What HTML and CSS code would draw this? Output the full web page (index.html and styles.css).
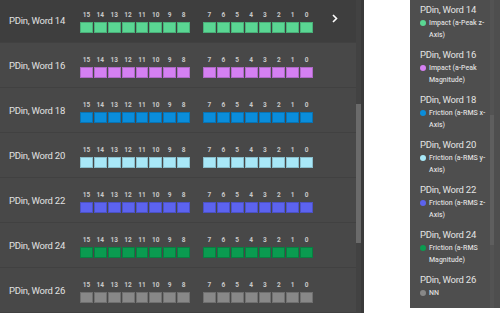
FILE: index.html
```html
<!DOCTYPE html>
<html lang="en">
<head>
    <meta charset="UTF-8">
    <meta name="viewport" content="width=device-width, initial-scale=1.0">
    <title>PDin Words</title>
    <link rel="stylesheet" href="styles.css">
</head>
<body>
    <div class="word-panel">
        <div class="word-list">
            <div class="word-row is-active">
                <div class="word-name">PDin, Word 14</div>
                <div class="bits green">
                    <div class="byte"><span>15</span><span>14</span><span>13</span><span>12</span><span>11</span><span>10</span><span>9</span><span>8</span><i></i><i></i><i></i><i></i><i></i><i></i><i></i><i></i></div>
                    <div class="byte"><span>7</span><span>6</span><span>5</span><span>4</span><span>3</span><span>2</span><span>1</span><span>0</span><i></i><i></i><i></i><i></i><i></i><i></i><i></i><i></i></div>
                </div>
                <svg class="chevron" width="6" height="9" viewBox="0 0 6 9"><polyline points="1,1 4.5,4.5 1,8" fill="none" stroke="#fff" stroke-width="1.6"/></svg>
            </div>
            <div class="word-row">
                <div class="word-name">PDin, Word 16</div>
                <div class="bits violet">
                    <div class="byte"><span>15</span><span>14</span><span>13</span><span>12</span><span>11</span><span>10</span><span>9</span><span>8</span><i></i><i></i><i></i><i></i><i></i><i></i><i></i><i></i></div>
                    <div class="byte"><span>7</span><span>6</span><span>5</span><span>4</span><span>3</span><span>2</span><span>1</span><span>0</span><i></i><i></i><i></i><i></i><i></i><i></i><i></i><i></i></div>
                </div>
            </div>
            <div class="word-row">
                <div class="word-name">PDin, Word 18</div>
                <div class="bits blue">
                    <div class="byte"><span>15</span><span>14</span><span>13</span><span>12</span><span>11</span><span>10</span><span>9</span><span>8</span><i></i><i></i><i></i><i></i><i></i><i></i><i></i><i></i></div>
                    <div class="byte"><span>7</span><span>6</span><span>5</span><span>4</span><span>3</span><span>2</span><span>1</span><span>0</span><i></i><i></i><i></i><i></i><i></i><i></i><i></i><i></i></div>
                </div>
            </div>
            <div class="word-row">
                <div class="word-name">PDin, Word 20</div>
                <div class="bits cyan">
                    <div class="byte"><span>15</span><span>14</span><span>13</span><span>12</span><span>11</span><span>10</span><span>9</span><span>8</span><i></i><i></i><i></i><i></i><i></i><i></i><i></i><i></i></div>
                    <div class="byte"><span>7</span><span>6</span><span>5</span><span>4</span><span>3</span><span>2</span><span>1</span><span>0</span><i></i><i></i><i></i><i></i><i></i><i></i><i></i><i></i></div>
                </div>
            </div>
            <div class="word-row">
                <div class="word-name">PDin, Word 22</div>
                <div class="bits indigo">
                    <div class="byte"><span>15</span><span>14</span><span>13</span><span>12</span><span>11</span><span>10</span><span>9</span><span>8</span><i></i><i></i><i></i><i></i><i></i><i></i><i></i><i></i></div>
                    <div class="byte"><span>7</span><span>6</span><span>5</span><span>4</span><span>3</span><span>2</span><span>1</span><span>0</span><i></i><i></i><i></i><i></i><i></i><i></i><i></i><i></i></div>
                </div>
            </div>
            <div class="word-row">
                <div class="word-name">PDin, Word 24</div>
                <div class="bits emerald">
                    <div class="byte"><span>15</span><span>14</span><span>13</span><span>12</span><span>11</span><span>10</span><span>9</span><span>8</span><i></i><i></i><i></i><i></i><i></i><i></i><i></i><i></i></div>
                    <div class="byte"><span>7</span><span>6</span><span>5</span><span>4</span><span>3</span><span>2</span><span>1</span><span>0</span><i></i><i></i><i></i><i></i><i></i><i></i><i></i><i></i></div>
                </div>
            </div>
            <div class="word-row">
                <div class="word-name">PDin, Word 26</div>
                <div class="bits gray">
                    <div class="byte"><span>15</span><span>14</span><span>13</span><span>12</span><span>11</span><span>10</span><span>9</span><span>8</span><i></i><i></i><i></i><i></i><i></i><i></i><i></i><i></i></div>
                    <div class="byte"><span>7</span><span>6</span><span>5</span><span>4</span><span>3</span><span>2</span><span>1</span><span>0</span><i></i><i></i><i></i><i></i><i></i><i></i><i></i><i></i></div>
                </div>
            </div>
        </div>
        <div class="scroll-track"><div class="scroll-thumb"></div></div>
    </div>

    <div class="legend-panel">
        <div class="legend-list">
            <div class="legend-item">
                <div class="legend-title">PDin, Word 14</div>
                <div class="legend-entry"><b class="dot green"></b><span>Impact (a-Peak z-Axis)</span></div>
            </div>
            <div class="legend-item">
                <div class="legend-title">PDin, Word 16</div>
                <div class="legend-entry"><b class="dot violet"></b><span>Impact (a-Peak Magnitude)</span></div>
            </div>
            <div class="legend-item">
                <div class="legend-title">PDin, Word 18</div>
                <div class="legend-entry"><b class="dot blue"></b><span>Friction (a-RMS x-Axis)</span></div>
            </div>
            <div class="legend-item">
                <div class="legend-title">PDin, Word 20</div>
                <div class="legend-entry"><b class="dot cyan"></b><span>Friction (a-RMS y-Axis)</span></div>
            </div>
            <div class="legend-item">
                <div class="legend-title">PDin, Word 22</div>
                <div class="legend-entry"><b class="dot indigo"></b><span>Friction (a-RMS z-Axis)</span></div>
            </div>
            <div class="legend-item">
                <div class="legend-title">PDin, Word 24</div>
                <div class="legend-entry"><b class="dot emerald"></b><span>Friction (a-RMS Magnitude)</span></div>
            </div>
            <div class="legend-item">
                <div class="legend-title">PDin, Word 26</div>
                <div class="legend-entry"><b class="dot gray"></b><span>NN</span></div>
            </div>
        </div>
        <div class="legend-track"><div class="legend-thumb"></div></div>
    </div>
</body>
</html>
```

FILE: styles.css
```css
* {
    margin: 0;
    padding: 0;
    box-sizing: border-box;
    font-family: Roboto, "Liberation Sans", Arial, sans-serif;
}

body {
    display: flex;
    align-items: flex-start;
    height: 313px;
    overflow: hidden;
    background: #fff;
}

/* left list of words */
.word-panel {
    display: flex;
    width: 364px;
    height: 313px;
    flex-shrink: 0;
    background: #484848;
    overflow: hidden;
}

.word-list {
    width: 356px;
    margin-top: -2px;
}

.word-row {
    display: flex;
    align-items: center;
    height: 45px;
    padding-left: 9px;
    border-bottom: 1px solid #414141;
}

.word-row.is-active {
    background: #3e3e3e;
}

.word-name {
    width: 71px;
    font-size: 9.5px;
    letter-spacing: -0.25px;
    color: #e2e2e2;
}

.bits {
    display: flex;
    gap: 13px;
    margin-top: 4px;
}

.byte {
    display: grid;
    grid-template-columns: repeat(8, 1fr);
    column-gap: 1px;
    row-gap: 3px;
    width: 110px;
}

.byte span {
    font-size: 6.5px;
    font-weight: 700;
    line-height: 8px;
    text-align: center;
    color: #c8c8c8;
}

.byte i {
    height: 11px;
    border: 1px solid rgba(0, 0, 0, 0.18);
}

.chevron {
    margin-left: 19px;
    margin-top: -4px;
}

.scroll-track {
    width: 8px;
    background: #424242;
    border-right: 3px solid #3a3a3a;
}

.scroll-thumb {
    height: 139px;
    margin-top: 104px;
    background: #6a6a6a;
}

/* colours */
.green i, .dot.green { background: #5ad693; }
.violet i, .dot.violet { background: #d580f2; }
.blue i, .dot.blue { background: #0a8ddb; }
.cyan i, .dot.cyan { background: #a8e8f8; }
.indigo i, .dot.indigo { background: #5c63ef; }
.emerald i, .dot.emerald { background: #0a9b50; }
.gray i, .dot.gray { background: #888888; }

/* right legend */
.legend-panel {
    display: flex;
    width: 100px;
    height: 308px;
    margin-left: 46px;
    flex-shrink: 0;
    background: #4e4e4e;
}

.legend-list {
    width: 80px;
    padding: 3px 0 0 10px;
}

.legend-item {
    margin-bottom: 7px;
}

.legend-title {
    font-size: 9.5px;
    letter-spacing: -0.25px;
    line-height: 13px;
    color: #e4e4e4;
}

.legend-entry {
    display: flex;
    align-items: flex-start;
    margin-top: 1px;
    font-size: 7px;
    font-weight: 500;
    line-height: 12px;
    color: #dcdcdc;
}

.dot {
    width: 6px;
    height: 6px;
    margin: 3px 3px 0 0;
    border-radius: 50%;
    flex-shrink: 0;
}

.legend-track {
    width: 4px;
    background: #535353;
}

.legend-thumb {
    height: 130px;
    margin-top: 115px;
    background: #5e5e5e;
}
```
